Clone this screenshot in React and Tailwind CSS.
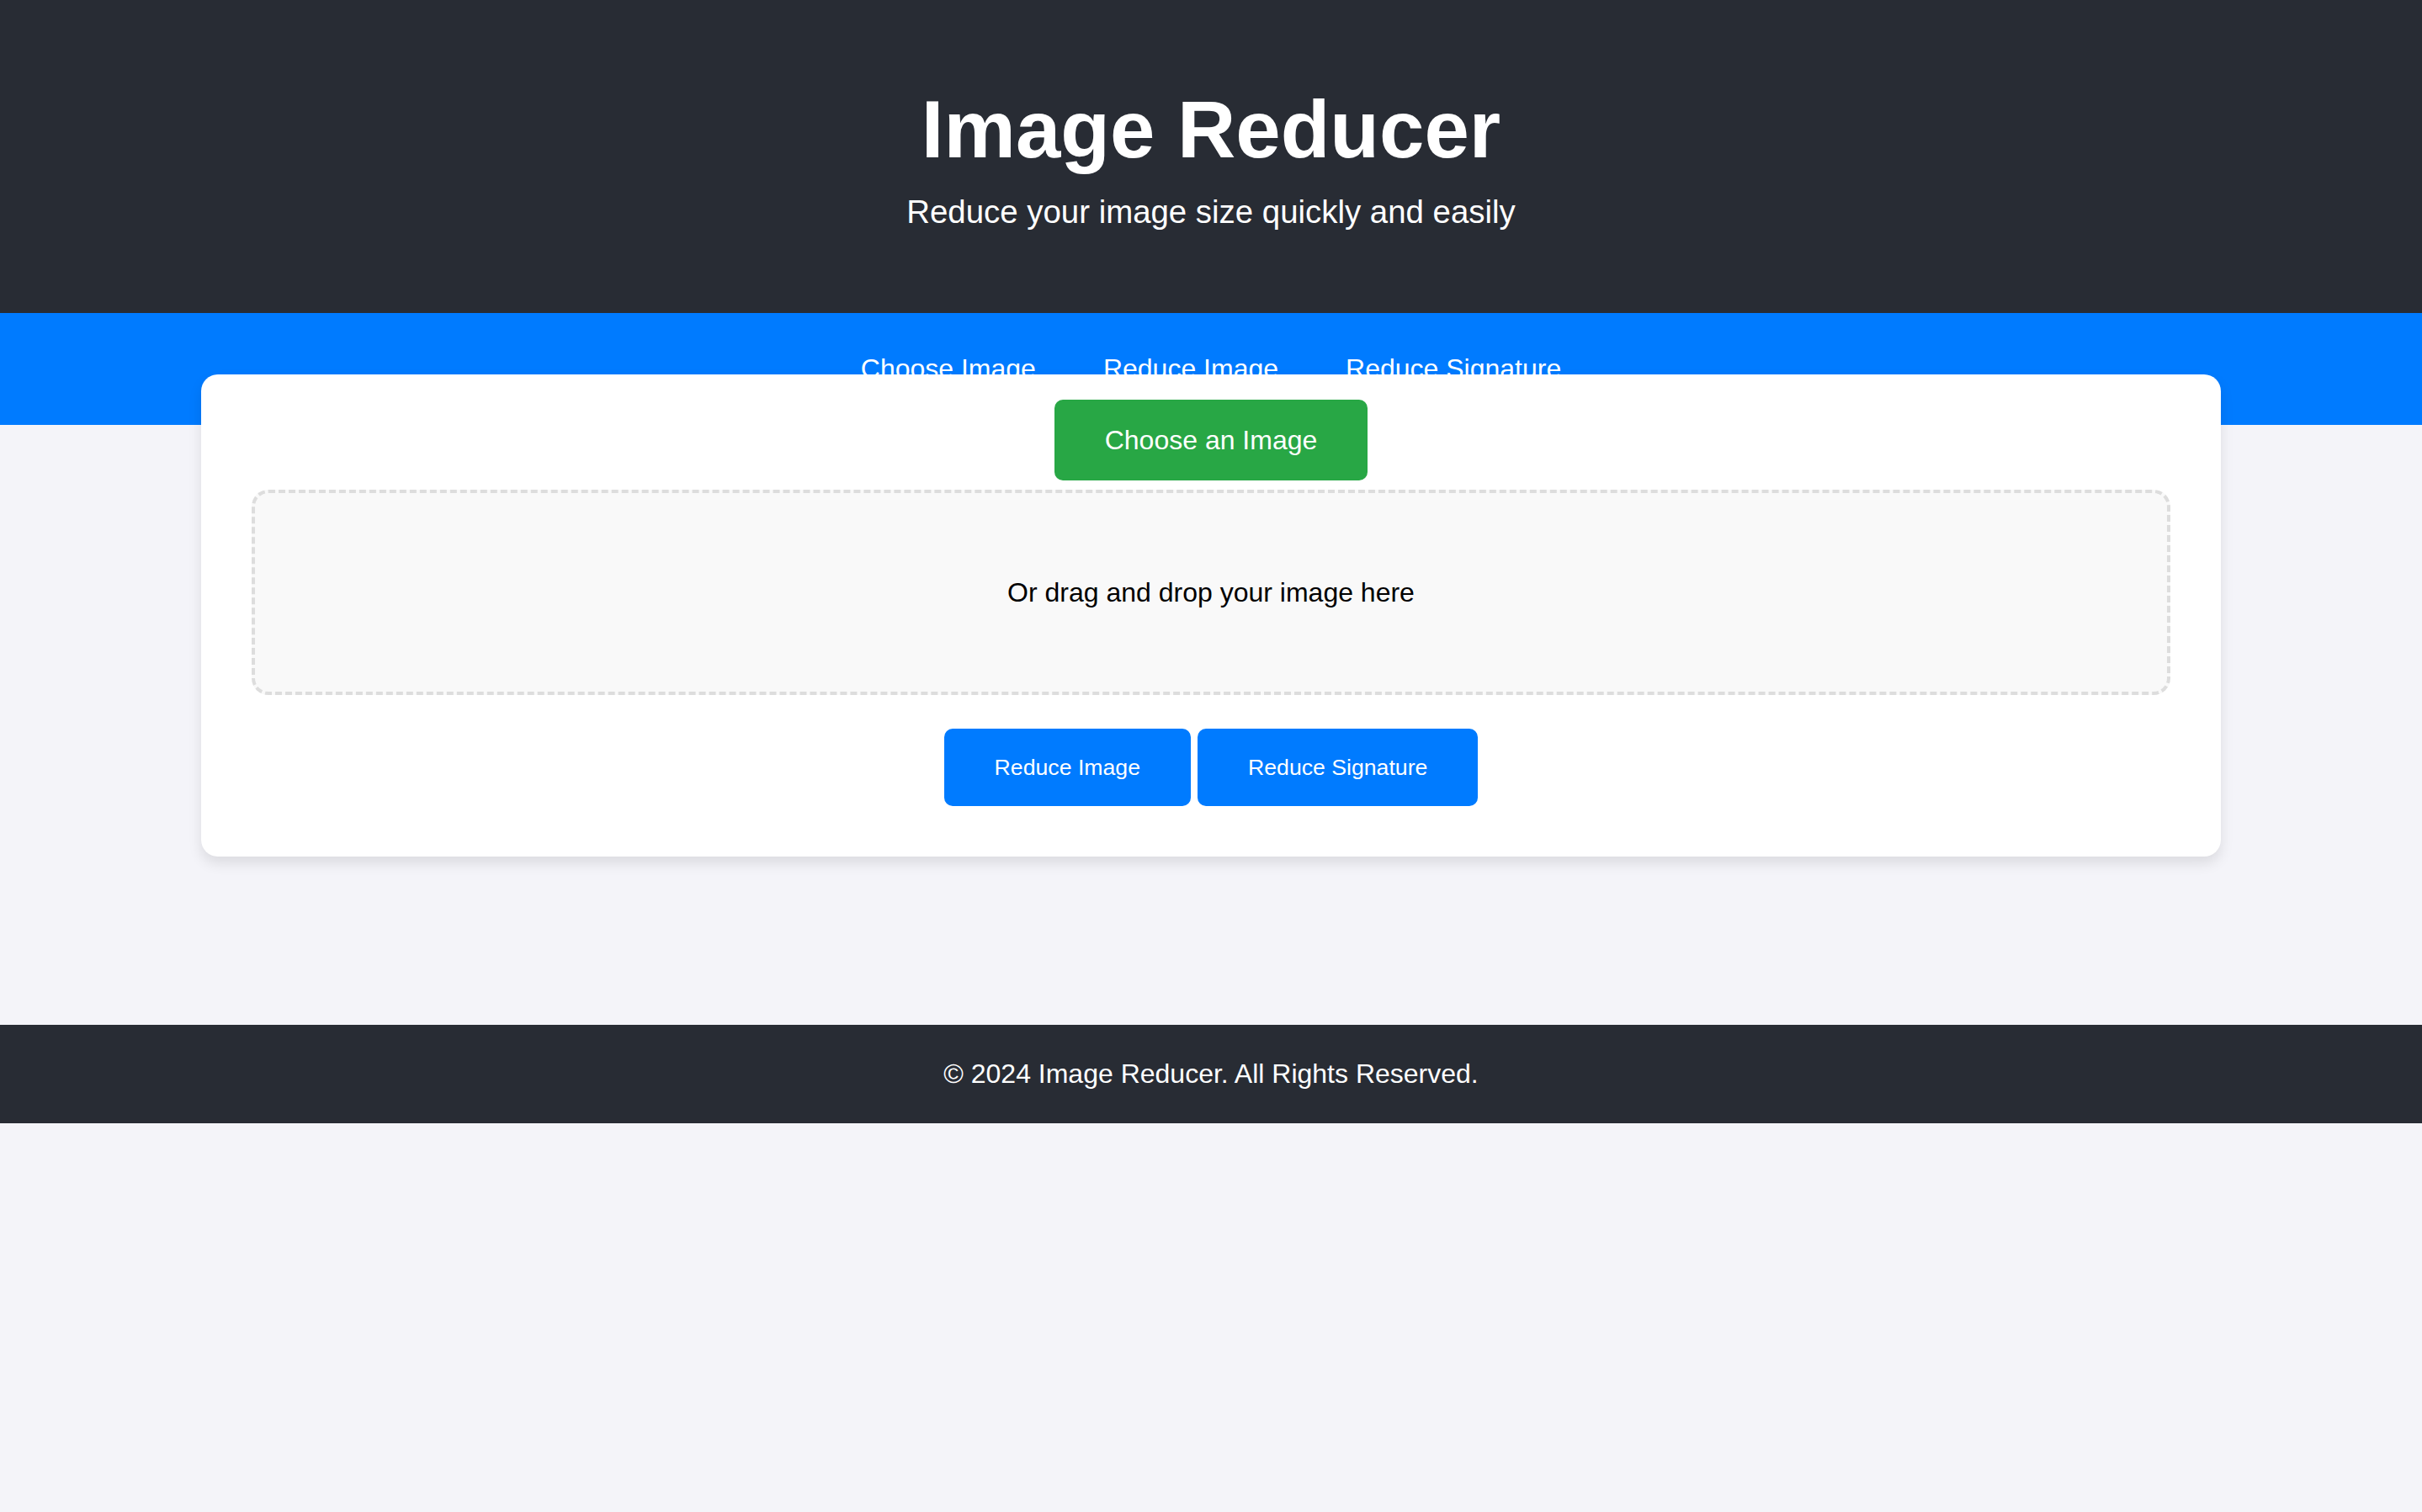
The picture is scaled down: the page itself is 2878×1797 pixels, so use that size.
export default function App() {
  const navItems = ["Choose Image", "Reduce Image", "Reduce Signature"];

  return (
    <div className="min-h-screen bg-[#f4f4f9] font-['Liberation_Sans',Arial,sans-serif]">
      {/* header */}
      <header className="bg-[#282c34] text-white text-center pt-[99px] pb-[98px]">
        <h1 className="text-[96px] font-bold leading-[110px]">Image Reducer</h1>
        <p className="text-[38.4px] leading-[44px] mt-[21px]">Reduce your image size quickly and easily</p>
      </header>

      {/* nav */}
      <nav className="bg-[#007bff] h-[133px]">
        <ul className="flex justify-center gap-[80px] pt-[48px] text-white text-[32px] leading-[37px]">
          {navItems.map((item) => (
            <li key={item}>{item}</li>
          ))}
        </ul>
      </nav>

      {/* card */}
      <main className="relative -mt-[60px] mx-auto w-[2400px] bg-white rounded-[20px] shadow-[0_8px_16px_rgba(0,0,0,0.1)] px-[60px] pt-[30px] pb-[60px]">
        <div className="flex justify-center">
          <button className="bg-[#28a745] text-white text-[32px] leading-[36px] px-[60px] py-[30px] rounded-[10px]">
            Choose an Image
          </button>
        </div>

        <div className="mt-[11px] h-[244px] border-[4px] border-dashed border-[#dddddd] bg-[#f9f9f9] rounded-[20px] flex items-center justify-center text-black text-[32px]">
          Or drag and drop your image here
        </div>

        <div className="mt-[40px] flex justify-center gap-[8px]">
          <button className="bg-[#007bff] text-white text-[26.67px] h-[92px] px-[60px] rounded-[10px]">Reduce Image</button>
          <button className="bg-[#007bff] text-white text-[26.67px] h-[92px] px-[60px] rounded-[10px]">Reduce Signature</button>
        </div>
      </main>

      {/* footer */}
      <footer className="mt-[200px] bg-[#282c34] text-white text-center py-[40px] text-[32px] leading-[37px]">
        © 2024 Image Reducer. All Rights Reserved.
      </footer>
    </div>
  );
}
